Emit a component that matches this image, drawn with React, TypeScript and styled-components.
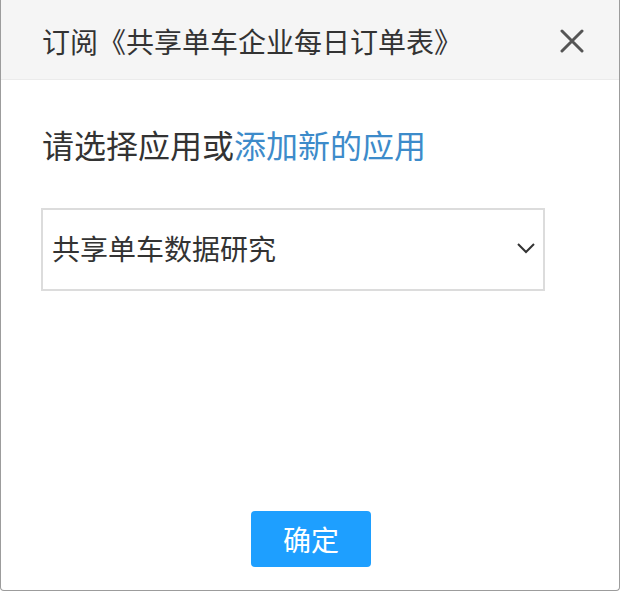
import styled, { createGlobalStyle } from "styled-components";

const GlobalStyle = createGlobalStyle`
	html, body {
		margin: 0;
		padding: 0;
		background: #ffffff;
		font-family: "Noto Sans CJK SC", "Noto Sans", sans-serif;
	}
`;

const Dialog = styled.div`
	box-sizing: border-box;
	width: 620px;
	height: 591px;
	display: flex;
	flex-direction: column;
	background: #ffffff;
	border-left: 1px solid #9c9c9c;
	border-right: 1px solid #9c9c9c;
	border-bottom: 1px solid #9c9c9c;
	border-bottom-right-radius: 4px;
	border-bottom-left-radius: 4px;
	overflow: hidden;
`;

const Header = styled.div`
	box-sizing: border-box;
	height: 80px;
	flex-shrink: 0;
	display: flex;
	align-items: center;
	justify-content: space-between;
	padding: 0 34px 0 41px;
	background: #f5f5f5;
	border-bottom: 1px solid #ebebeb;
`;

const Title = styled.div`
	font-size: 28px;
	line-height: 40px;
	color: #333333;
	margin-top: 2px;
`;

const CloseButton = styled.button`
	border: none;
	background: transparent;
	padding: 0;
	width: 26px;
	height: 26px;
	display: flex;
	align-items: center;
	justify-content: center;
	cursor: pointer;
	margin-top: 2px;
`;

const Body = styled.div`
	flex: 1;
	display: flex;
	flex-direction: column;
	padding: 42px 0 0 40px;
`;

const Prompt = styled.div`
	font-size: 32px;
	line-height: 44px;
	color: #333333;
	padding-left: 1px;
`;

const Link = styled.a`
	color: #3d8bca;
	text-decoration: none;
	cursor: pointer;
`;

const Select = styled.div`
	box-sizing: border-box;
	margin-top: 42px;
	width: 504px;
	height: 83px;
	border: 2px solid #dcdcdc;
	display: flex;
	align-items: center;
	justify-content: space-between;
	padding: 0 6px 3px 9px;
	font-size: 28px;
	color: #333333;
`;

const Footer = styled.div`
	display: flex;
	justify-content: center;
	padding: 0 0 23px 2px;
`;

const PrimaryButton = styled.button`
	width: 120px;
	height: 56px;
	border: none;
	border-radius: 4px;
	background: #1e9fff;
	color: #ffffff;
	font-family: "Noto Sans CJK SC", "Noto Sans", sans-serif;
	font-size: 28px;
	cursor: pointer;
`;

export default function App() {
	return (
		<>
			<GlobalStyle />
			<Dialog>
				<Header>
					<Title>订阅《共享单车企业每日订单表》</Title>
					<CloseButton aria-label="关闭">
						<svg width="24" height="24" viewBox="0 0 24 24">
							<path
								d="M2 2 L22 22 M22 2 L2 22"
								stroke="#555555"
								strokeWidth="3"
								strokeLinecap="round"
							/>
						</svg>
					</CloseButton>
				</Header>
				<Body>
					<Prompt>
						请选择应用或<Link>添加新的应用</Link>
					</Prompt>
					<Select>
						<span>共享单车数据研究</span>
						<svg width="22" height="22" viewBox="0 0 22 22">
							<path
								d="M3 7 L11 15 L19 7"
								fill="none"
								stroke="#333333"
								strokeWidth="2"
							/>
						</svg>
					</Select>
				</Body>
				<Footer>
					<PrimaryButton>确定</PrimaryButton>
				</Footer>
			</Dialog>
		</>
	);
}
